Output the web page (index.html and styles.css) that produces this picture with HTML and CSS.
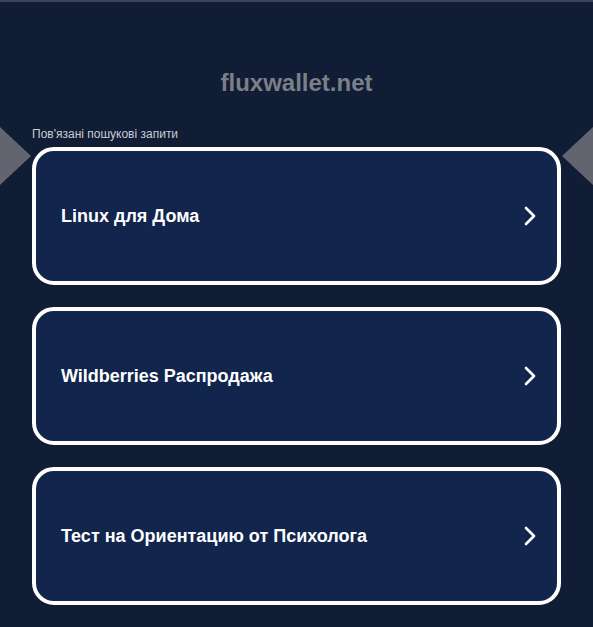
FILE: index.html
```html
<!DOCTYPE html>
<html lang="uk">

<head>
    <meta charset="UTF-8">
    <meta name="viewport" content="width=device-width, initial-scale=1.0">
    <title>fluxwallet.net</title>
    <link rel="stylesheet" href="styles.css">
</head>

<body>
    <div class="page">
        <h1 class="domain">fluxwallet.net</h1>

        <div class="related">
            <span class="arrow arrow-left"></span>
            <span class="arrow arrow-right"></span>

            <div class="related-title">Пов'язані пошукові запити</div>

            <a href="#" class="link-card">
                <span>Linux для Дома</span>
                <svg class="chevron" width="14" height="20" viewBox="0 0 14 20">
                    <path d="M3 2 L11 10 L3 18" fill="none" stroke="#fff" stroke-width="2.6" stroke-linecap="round" stroke-linejoin="round" />
                </svg>
            </a>
            <a href="#" class="link-card">
                <span>Wildberries Распродажа</span>
                <svg class="chevron" width="14" height="20" viewBox="0 0 14 20">
                    <path d="M3 2 L11 10 L3 18" fill="none" stroke="#fff" stroke-width="2.6" stroke-linecap="round" stroke-linejoin="round" />
                </svg>
            </a>
            <a href="#" class="link-card">
                <span>Тест на Ориентацию от Психолога</span>
                <svg class="chevron" width="14" height="20" viewBox="0 0 14 20">
                    <path d="M3 2 L11 10 L3 18" fill="none" stroke="#fff" stroke-width="2.6" stroke-linecap="round" stroke-linejoin="round" />
                </svg>
            </a>
        </div>
    </div>
</body>

</html>
```

FILE: styles.css
```css
html,
body {
    margin: 0;
    padding: 0;
}

body {
    font-family: "Liberation Sans", Arial, sans-serif;
    background-color: #111c35;
    border-top: 2px solid #3d4455;
    overflow: hidden;
}

.page {
    width: 529px;
    margin: 0 auto;
    padding-top: 66px;
}

.domain {
    margin: 0;
    text-align: center;
    font-size: 24px;
    font-weight: bold;
    color: #7b7f87;
    line-height: 30px;
}

.related {
    position: relative;
    margin-top: 29px;
}

.related-title {
    font-size: 12px;
    color: #c9ccd3;
    line-height: 14px;
    margin-bottom: 6px;
}

.arrow {
    position: absolute;
    top: 0;
    width: 0;
    height: 0;
    border-top: 29px solid transparent;
    border-bottom: 29px solid transparent;
}

.arrow-left {
    left: -32px;
    border-left: 31px solid #62656f;
}

.arrow-right {
    right: -32px;
    border-right: 31px solid #62656f;
}

.link-card {
    display: flex;
    align-items: center;
    justify-content: space-between;
    height: 130px;
    padding: 0 20px 0 25px;
    margin-bottom: 22px;
    background-color: #11254d;
    border: 4px solid #fff;
    border-radius: 22px;
    color: #fff;
    text-decoration: none;
    font-size: 18px;
    font-weight: bold;
}

.chevron {
    display: block;
}
```
